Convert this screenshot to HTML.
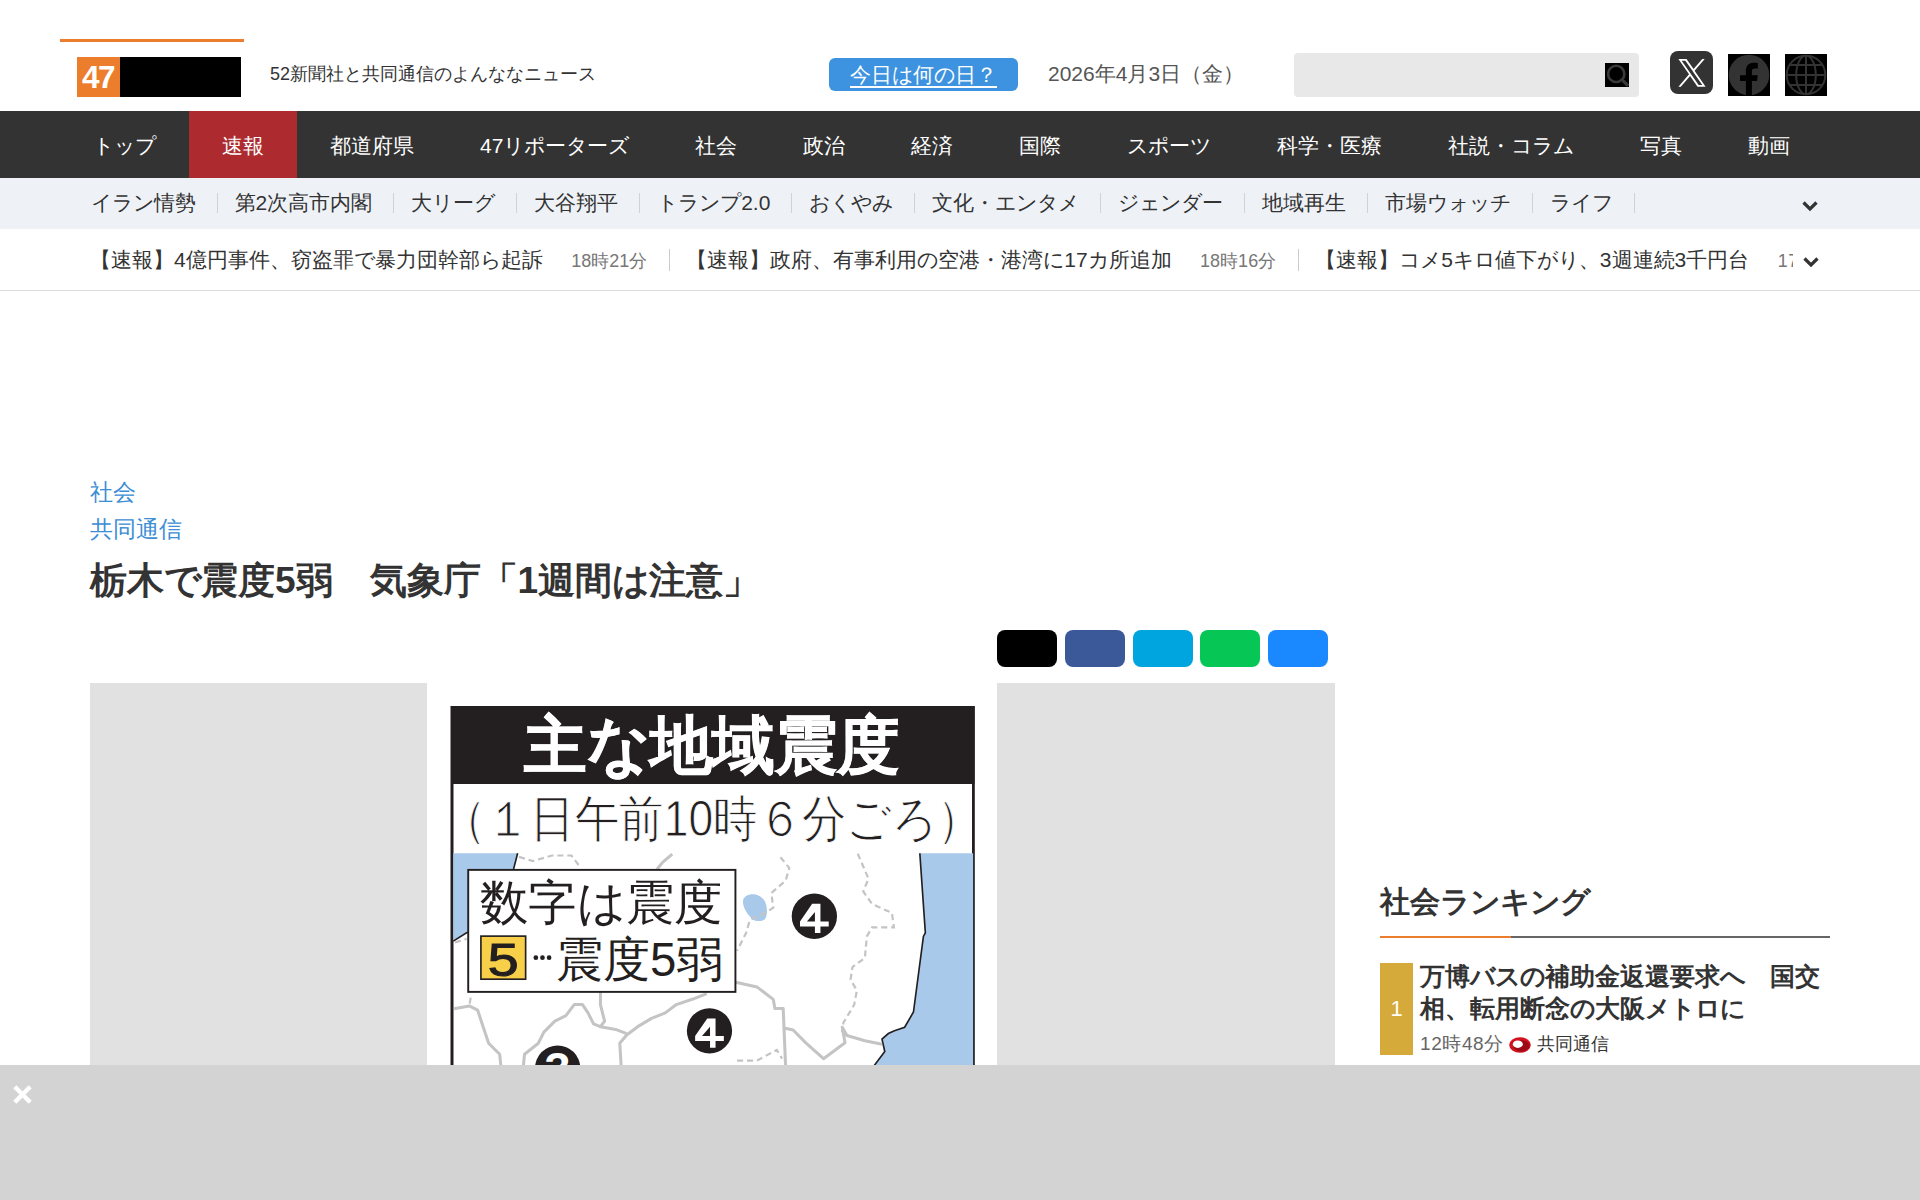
<!DOCTYPE html>
<html lang="ja">
<head>
<meta charset="utf-8">
<title>47NEWS</title>
<style>
*{margin:0;padding:0;box-sizing:border-box}
html,body{width:1920px;height:1200px;overflow:hidden;background:#fff}
body{font-family:"Liberation Sans",sans-serif;color:#333;position:relative}
.abs{position:absolute}
.nowrap{white-space:nowrap}
/* header */
#topline{left:60px;top:39px;width:184px;height:3px;background:#ec7d2c}
#logo{left:77px;top:57px;width:164px;height:40px;background:#000}
#logo .o{position:absolute;left:0;top:0;width:43px;height:40px;background:#ec7d2c;color:#fff;font-weight:bold;font-size:31.5px;line-height:40px;text-align:center;letter-spacing:-1.5px;text-indent:-1px}
#tag{left:270px;top:62px;font-size:18px;line-height:24px;color:#333}
#today{left:829px;top:58px;width:189px;height:33px;background:#3d93df;border-radius:6px;color:#fff;font-size:21px;line-height:33px;text-align:center;text-decoration:underline;text-underline-offset:4px}
#date{left:1048px;top:61px;font-size:21px;line-height:26px;color:#555}
#search{left:1294px;top:53px;width:345px;height:44px;background:#e8e8e8;border-radius:4px}
#sicon{left:1605px;top:63px;width:24px;height:24px}
#xicon{left:1670px;top:51px;width:43px;height:43px}
#ficon{left:1728px;top:54px;width:42px;height:42px}
#gicon{left:1785px;top:54px;width:42px;height:42px}
.chev{width:18px;height:12px}
/* nav */
#nav{left:0;top:111px;width:1920px;height:67px;background:#333}
#nav ul{position:absolute;left:60px;top:0;display:flex;list-style:none;height:67px}
#nav li{padding:2px 33px 0;height:67px;font-size:21px;line-height:66px;color:#fff;white-space:nowrap}
#nav li.on{background:#ad2b2e}
#sub{left:0;top:178px;width:1920px;height:51px;background:#eef2f7}
#sub ul{position:absolute;left:90.5px;top:-1px;display:flex;list-style:none;height:51px;align-items:center}
#sub li{font-size:21px;line-height:51px;color:#333;white-space:nowrap;display:flex;align-items:center}
#sub li i{display:block;width:1px;height:20px;background:#cfd3d8;margin:0 17px 0 21px}
#tick{left:0;top:229px;width:1920px;height:62px;border-bottom:1px solid #ddd;background:#fff}
#tick .row{position:absolute;left:90px;top:0;height:61px;display:flex;align-items:center;white-space:nowrap;width:1710px;overflow:hidden}
#tick .row>*{flex-shrink:0}
#tick .t{font-size:21px;color:#333}
#tick .tm{font-size:18px;color:#777;margin-left:28.5px;position:relative;top:1px}
#tick i{display:block;width:1px;height:22px;background:#ccc;margin:0 16px 0 22px}
#tick .fade{position:absolute;left:1793px;top:0;width:10px;height:61px;background:#fff}
/* article */
#cat{left:90px;top:478px;font-size:22.5px;line-height:30px;color:#3d8ed5}
#src{left:90px;top:515px;font-size:22.5px;line-height:30px;color:#3d8ed5}
#title{left:90px;top:558px;font-size:37px;line-height:46px;font-weight:bold;color:#333;white-space:nowrap}
.sh{top:630px;width:60px;height:37px;border-radius:8px}
#imgwrap{left:90px;top:683px;width:1245px;height:400px;background:#e1e1e1}
#img{left:427px;top:683px;width:570px;height:382px;background:#fff}
/* ranking */
#rkh{left:1380px;top:880px;font-size:30px;line-height:44px;font-weight:bold;color:#333;white-space:nowrap}
#rkl{left:1380px;top:936px;width:450px;height:2px;background:#666}
#rkl2{left:1380px;top:936px;width:131px;height:2px;background:#ec7d2c}
#rk1n{left:1380px;top:963px;width:33px;height:92px;background:#d6aa3a;color:#fff;font-size:22px;line-height:92px;text-align:center}
#rk1t{left:1420px;top:959.5px;width:410px;font-size:25px;line-height:32px;font-weight:bold;color:#333}
#rk1m{left:1420px;top:1031px;font-size:19px;line-height:26px;color:#666;white-space:nowrap;letter-spacing:0.6px}
#rk1logo{left:1509px;top:1037px;width:22px;height:16px}
#rk1s{left:1537px;top:1031px;font-size:18px;line-height:26px;color:#333;white-space:nowrap}
/* bottom overlay */
#ov{left:0;top:1065px;width:1920px;height:135px;background:#d3d3d3}
.k{letter-spacing:-1px}
#tag .k{letter-spacing:0}
</style>
</head>
<body>
<div id="topline" class="abs"></div>
<div id="logo" class="abs"><div class="o">47</div></div>
<div id="tag" class="abs nowrap">52新聞社<span class="k">と</span>共同通信<span class="k">のよんななニュ</span>ー<span class="k">ス</span></div>
<div id="today" class="abs nowrap">今日<span class="k">は</span>何<span class="k">の</span>日？</div>
<div id="date" class="abs nowrap">2026年4月3日（金）</div>
<div id="search" class="abs"></div>
<div id="sicon" class="abs"><svg width="24" height="24" viewBox="0 0 24 24"><rect width="24" height="24" fill="#000"/><circle cx="11.2" cy="10.9" r="8.1" fill="none" stroke="#3a3a3a" stroke-width="2.6"/><path d="M18.3 18 L22.2 21.9" stroke="#3a3a3a" stroke-width="3.2" stroke-linecap="round"/></svg></div>
<div id="xicon" class="abs"><svg width="43" height="43" viewBox="0 0 43 43"><rect width="43" height="43" rx="8" fill="#333"/><path transform="translate(8.4,7.9) scale(0.02267)" fill="#fff" fill-rule="evenodd" d="M714.163 519.284L1160.89 0H1055.03L667.137 450.887L357.328 0H0L468.492 681.821L0 1226.37H105.866L515.491 750.218L842.672 1226.37H1200L714.137 519.284H714.163ZM569.165 687.828L521.697 619.934L144.011 79.6944H306.615L611.412 515.685L658.88 583.579L1055.08 1150.3H892.476L569.165 687.854V687.828Z"/></svg></div>
<div id="ficon" class="abs"><svg width="42" height="42" viewBox="0 0 42 42"><rect width="42" height="42" fill="#000"/><circle cx="21" cy="21" r="20.3" fill="#333"/><path d="M17.9 42 V26.9 H12 V21.2 H17.9 V16.5 C17.9 11.5 20.8 8.7 25.5 8.7 C27.5 8.7 29.8 8.9 29.8 8.9 V14.4 H26.6 C24.6 14.4 23.9 15.6 23.9 17.3 V21.2 H29.8 L29 26.9 H23.9 V42 Z" fill="#000"/></svg></div>
<div id="gicon" class="abs"><svg width="42" height="42" viewBox="0 0 42 42"><rect width="42" height="42" fill="#000"/><g fill="none" stroke="#333" stroke-width="2"><circle cx="21" cy="21" r="19.3"/><ellipse cx="21" cy="21" rx="9.8" ry="19.3"/><path d="M21 1.7 V40.3 M1.7 21 H40.3 M4.3 11 H37.7 M4.3 31 H37.7"/></g></svg></div>

<div id="nav" class="abs"><ul>
<li><span class="k">トップ</span></li><li class="on">速報</li><li>都道府県</li><li>47<span class="k">リポ</span>ー<span class="k">タ</span>ー<span class="k">ズ</span></li><li>社会</li><li>政治</li><li>経済</li><li>国際</li><li><span class="k">スポ</span>ー<span class="k">ツ</span></li><li>科学・医療</li><li>社説・<span class="k">コラム</span></li><li>写真</li><li>動画</li>
</ul></div>
<div id="sub" class="abs"><ul>
<li><span class="k">イラン</span>情勢<i></i></li><li>第2次高市内閣<i></i></li><li>大<span class="k">リ</span>ー<span class="k">グ</span><i></i></li><li>大谷翔平<i></i></li><li><span class="k">トランプ</span>2.0<i></i></li><li><span class="k">おくやみ</span><i></i></li><li>文化・<span class="k">エンタメ</span><i></i></li><li><span class="k">ジェンダ</span>ー<i></i></li><li>地域再生<i></i></li><li>市場<span class="k">ウォッチ</span><i></i></li><li><span class="k">ライフ</span><i></i></li>
</ul><div class="abs chev" style="left:1801px;top:20px"><svg width="18" height="12" viewBox="0 0 18 12"><path d="M2.5 2.5 L9 9 L15.5 2.5" fill="none" stroke="#333" stroke-width="3.2"/></svg></div></div>
<div id="tick" class="abs"><div class="row">
<span class="t">【速報】4億円事件、窃盗罪<span class="k">で</span>暴力団幹部<span class="k">ら</span>起訴</span><span class="tm">18時21分</span><i></i>
<span class="t">【速報】政府、有事利用<span class="k">の</span>空港・港湾<span class="k">に</span>17<span class="k">カ</span>所追加</span><span class="tm">18時16分</span><i></i>
<span class="t">【速報】<span class="k">コメ</span>5<span class="k">キロ</span>値下<span class="k">がり</span>、3週連続3千円台</span><span class="tm" style="margin-left:28.5px;letter-spacing:0.5px">17時58分</span>
</div><div class="fade"></div><div class="abs chev" style="left:1802px;top:24.5px"><svg width="18" height="12" viewBox="0 0 18 12"><path d="M2.5 2.5 L9 9 L15.5 2.5" fill="none" stroke="#333" stroke-width="3.2"/></svg></div></div>

<div id="cat" class="abs nowrap">社会</div>
<div id="src" class="abs nowrap">共同通信</div>
<div id="title" class="abs">栃木<span class="k">で</span>震度5弱　気象庁「1週間<span class="k">は</span>注意」</div>
<div class="abs sh" style="left:997.4px;background:#000"></div>
<div class="abs sh" style="left:1065.2px;background:#3b5998"></div>
<div class="abs sh" style="left:1132.7px;background:#00a4de"></div>
<div class="abs sh" style="left:1200.1px;background:#06c755"></div>
<div class="abs sh" style="left:1267.7px;background:#1a88ff"></div>
<div id="imgwrap" class="abs"></div>
<div id="img" class="abs"><svg width="570" height="382" viewBox="0 0 570 382">
<rect width="570" height="382" fill="#fff"/>
<rect x="24" y="23" width="523.5" height="78" fill="#231f20"/>
<rect x="23.5" y="23" width="3" height="360" fill="#231f20"/>
<rect x="545" y="23" width="2.8" height="360" fill="#231f20"/>
<text x="97" y="84" font-size="63" font-weight="bold" fill="#fff" stroke="#fff" stroke-width="0.8" textLength="376" lengthAdjust="spacingAndGlyphs">主な地域震度</text>
<text x="14.5" y="152.5" font-size="50" fill="#231f20" stroke="#fff" stroke-width="0.9" paint-order="fill" textLength="540" lengthAdjust="spacingAndGlyphs">（１日午前10時６分ごろ）</text>
<g transform="translate(23,167) scale(0.27604)">
<path d="M12 12 L245 12 L225 90 L200 200 L150 280 L60 300 L12 330 Z" fill="#a9c9ea"/>
<path d="M1702 12 L1895 12 L1895 790 L1530 790 L1575 730 L1565 685 L1588 665 L1647 642 L1679 587 L1715 313 L1722 300 Z" fill="#a9c9ea"/>
<path d="M1702 12 L1722 300 L1715 313 L1679 587 L1647 642 L1610 655 L1588 665 L1565 685 L1575 730 L1530 790" fill="none" stroke="#231f20" stroke-width="6"/>
<path d="M12 330 L60 300 L150 280 L200 200 L225 90 L245 12" fill="none" stroke="#231f20" stroke-width="6"/>
<path d="M1062 180 C1070 155 1120 150 1140 185 C1152 210 1150 240 1140 252 C1120 262 1100 258 1090 245 C1075 230 1058 205 1062 180 Z" fill="#a9c9ea"/>
<g fill="none" stroke="#c4c4c4" stroke-width="11" stroke-linejoin="round">
<path d="M805 15 L770 45 L750 70"/>
<path d="M1035 479 L1112 496 L1171 541 L1177 574 L1207 574 L1210 645 L1243 652 L1288 698 L1353 756 L1431 698 L1421 642 L1438 672 L1503 691 L1565 704"/>
<path d="M1210 645 L1216 790"/>
<path d="M930 520 L880 540 L820 560 L780 590 L730 610 L680 640 L640 670 L615 700 L620 782"/>
<path d="M545 510 L545 560 L560 620 L545 640 L600 650 L640 665"/>
<path d="M15 575 L70 565 L100 580 L120 640 L140 700 L180 740 L185 790"/>
<path d="M265 790 L270 740 L320 700 L340 660 L380 620 L420 600 L450 560 L480 560 L500 590 L520 630 L545 640"/>
</g>
<g fill="none" stroke="#c4c4c4" stroke-width="8" stroke-dasharray="22 14">
<path d="M250 25 L300 40 L370 20 L440 20 L470 60"/>
<path d="M1197 26 L1229 65 L1216 111 L1164 156 L1171 209 L1151 222 L1086 254 L1073 300 L1040 365"/>
<path d="M1477 13 L1516 104 L1497 150 L1529 196 L1601 228 L1608 280 L1529 280 L1510 313 L1503 391 L1458 424 L1451 469 L1474 509 L1464 561 L1425 626 L1420 660"/>
<path d="M1040 763 L1112 763 L1184 724 L1203 756"/>
<path d="M18 335 L60 322"/><path d="M75 535 L70 565"/>
</g>
<rect x="66" y="72" width="968" height="442" fill="#fff" stroke="#231f20" stroke-width="7"/>
<circle cx="1320" cy="240" r="82" fill="#231f20"/>
<circle cx="940" cy="655" r="82" fill="#231f20"/>
<circle cx="390" cy="790" r="82" fill="#231f20"/>
<path transform="translate(1320,242)" d="M-8 -47 H22 V17 H52 V35 H22 V59 H2 V35 H-52 V17 Z M2 -17 L-27 17 H2 Z" fill="#fff" fill-rule="evenodd"/>
<path transform="translate(940,657)" d="M-8 -47 H22 V17 H52 V35 H22 V59 H2 V35 H-52 V17 Z M2 -17 L-27 17 H2 Z" fill="#fff" fill-rule="evenodd"/>
<text x="390" y="850" font-size="170" font-weight="bold" fill="#fff" text-anchor="middle">3</text>
<rect x="112" y="312" width="162" height="156" fill="#f8cf48" stroke="#231f20" stroke-width="6"/>
<text x="193" y="455" font-size="166" fill="#231f20" stroke="#231f20" stroke-width="4" text-anchor="middle" textLength="112" lengthAdjust="spacingAndGlyphs">5</text>
<text x="108" y="250" font-size="175" fill="#231f20" textLength="880" lengthAdjust="spacingAndGlyphs">数字は震度</text>
<circle cx="311" cy="390" r="8.5" fill="#231f20"/><circle cx="335" cy="390" r="8.5" fill="#231f20"/><circle cx="359" cy="390" r="8.5" fill="#231f20"/>
<text x="383" y="455" font-size="175" fill="#231f20" textLength="608" lengthAdjust="spacingAndGlyphs">震度5弱</text>
</g>
</svg></div>

<div id="rkh" class="abs">社会<span class="k">ランキング</span></div>
<div id="rkl" class="abs"></div><div id="rkl2" class="abs"></div>
<div id="rk1n" class="abs">1</div>
<div id="rk1t" class="abs">万博<span class="k">バスの</span>補助金返還要求<span class="k">へ</span>　国交相、転用断念<span class="k">の</span>大阪<span class="k">メトロに</span></div>
<div id="rk1m" class="abs">12時48分</div>
<div id="rk1logo" class="abs"><svg width="22" height="16" viewBox="0 0 22 16"><ellipse cx="11" cy="8" rx="10.8" ry="7.8" fill="#d3121f"/><ellipse cx="12.3" cy="8.8" rx="8.2" ry="5.6" fill="#9c0c17"/><ellipse cx="8.8" cy="7.2" rx="5" ry="3.7" fill="#fff"/></svg></div>
<div id="rk1s" class="abs">共同通信</div>

<div id="ov" class="abs"><svg class="abs" style="left:13px;top:20px" width="19" height="19" viewBox="0 0 19 19"><path d="M1.8 1.8 L17.2 17.2 M17.2 1.8 L1.8 17.2" stroke="#fff" stroke-width="4.4"/></svg></div>
</body>
</html>
